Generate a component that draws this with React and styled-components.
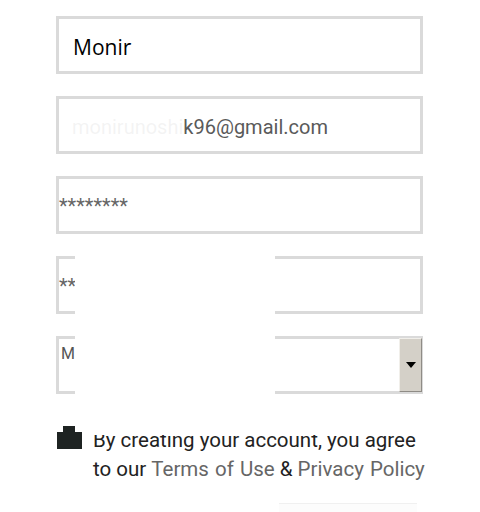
import React from 'react';
import styled, { createGlobalStyle } from 'styled-components';

const GlobalStyle = createGlobalStyle`
  html, body {
    margin: 0;
    padding: 0;
    background: #ffffff;
    font-family: Roboto, "Liberation Sans", sans-serif;
  }
`;

const Page = styled.div`
  position: relative;
  width: 480px;
  height: 512px;
  overflow: hidden;
  box-sizing: border-box;
  padding: 16px 0 0 56px;
`;

const Form = styled.form`
  display: flex;
  flex-direction: column;
  gap: 22px;
  width: 367px;
`;

const Field = styled.div`
  display: flex;
  align-items: ${(p) => (p.$top ? 'stretch' : 'center')};
  height: 58px;
  box-sizing: border-box;
  border: 3px solid #dadada;
  padding: ${(p) => p.$pad || '0'};
  background: #fff;
`;

const Value = styled.span`
  flex: 1;
  font-family: ${(p) => (p.$open ? '"Open Sans", sans-serif' : 'Roboto, sans-serif')};
  font-size: ${(p) => p.$size || 16}px;
  color: ${(p) => p.$color || '#555'};
  white-space: nowrap;
  line-height: 1;
  padding: ${(p) => p.$pad || '0'};
`;

const SelectButton = styled.div`
  width: 23px;
  margin: -1px -2px -1px 0;
  box-sizing: border-box;
  background: #d4d0c8;
  border-top: 1px solid #f1efea;
  border-left: 1px solid #f1efea;
  border-right: 1px solid #8f8c86;
  border-bottom: 1px solid #8f8c86;
  display: flex;
  align-items: center;
  justify-content: center;
`;

const Arrow = styled.span`
  width: 0;
  height: 0;
  border-left: 5px solid transparent;
  border-right: 5px solid transparent;
  border-top: 6px solid #000;
`;

const AgreeRow = styled.div`
  display: flex;
  align-items: flex-start;
  gap: 11px;
  margin-top: 10px;
  padding-left: 1px;
`;

const CheckMark = styled.svg`
  flex: none;
`;

const AgreeText = styled.p`
  margin: 0;
  font-family: Roboto, sans-serif;
  font-size: 20.5px;
  line-height: 29px;
  color: #222;
  white-space: nowrap;
`;

const Link = styled.span`
  color: #666;
  word-spacing: 1px;
`;

const Submit = styled.div`
  align-self: flex-end;
  width: 138px;
  height: 40px;
  margin: -3px 6px 0 0;
  background: #fcfcfc;
  border-top: 1px solid #f0f0f0;
`;

const Patch = styled.div`
  position: absolute;
  background: #fff;
  opacity: ${(p) => p.$fade || 1};
`;

export default function App() {
  return (
    <Page>
      <GlobalStyle />
      <Form>
        <Field $pad="4px 0 0 14px">
          <Value $open $size={21} $color="#000">Monir</Value>
        </Field>
        <Field $pad="4px 0 0 13px">
          <Value $size={20} $color="#5a5a5a">monirunoshik96@gmail.com</Value>
        </Field>
        <Field $pad="2px 0 0 0">
          <Value $size={20} $color="#666">********</Value>
        </Field>
        <Field $pad="2px 0 0 0">
          <Value $size={20} $color="#666">**</Value>
        </Field>
        <Field $top>
          <Value $size={16} $color="#555" $pad="7px 0 0 2px">M</Value>
          <SelectButton>
            <Arrow />
          </SelectButton>
        </Field>
        <AgreeRow>
          <CheckMark width="25" height="23" viewBox="0 0 25 23">
            <polygon points="6,0 18,0 18,6 25,6 25,23 0,23 0,6 6,6" fill="#1e2322" />
          </CheckMark>
          <AgreeText>
            By creating your account, you agree
            <br />
            to our <Link>Terms of Use</Link> &amp; <Link>Privacy Policy</Link>
          </AgreeText>
        </AgreeRow>
        <Submit />
      </Form>
      <Patch style={{ left: 75, top: 245, width: 200, height: 155 }} />
      <Patch $fade={0.93} style={{ left: 59, top: 106, width: 124, height: 34 }} />
      <Patch style={{ left: 84, top: 405, width: 360, height: 30 }} />
    </Page>
  );
}
